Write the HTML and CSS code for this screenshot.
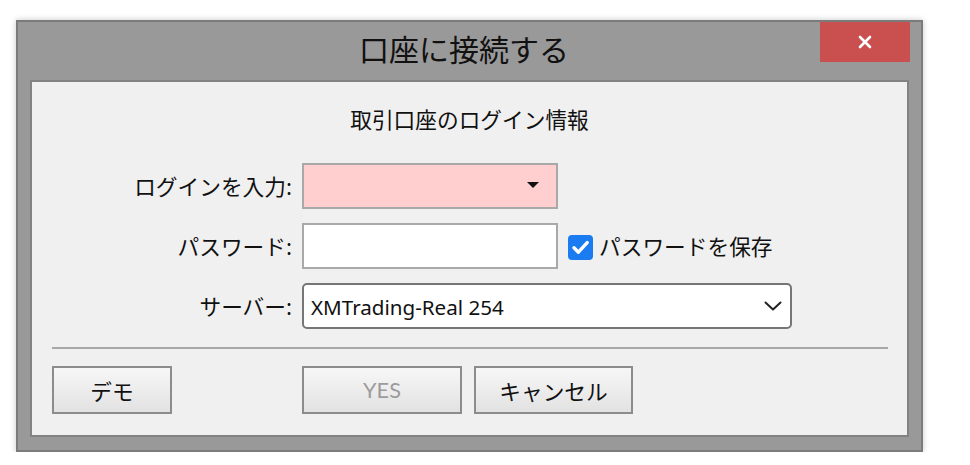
FILE: index.html
```html
<!DOCTYPE html>
<html lang="ja">
<head>
<meta charset="utf-8">
<title>口座に接続する</title>
<link rel="stylesheet" href="styles.css">
</head>
<body>
<div class="window">
  <div class="titlebar">
    <div class="spacer"></div>
    <div class="title">口座に接続する</div>
    <button class="close" type="button" aria-label="閉じる">
      <svg width="14" height="14" viewBox="0 0 14 14"><path d="M2 2 L12 12 M12 2 L2 12" stroke="#fff" stroke-width="2.6" stroke-linecap="round" fill="none"/></svg>
    </button>
  </div>
  <div class="panel">
    <div class="subtitle">取引口座のログイン情報</div>
    <div class="form">
      <label class="label">ログインを入力:</label>
      <div class="field login">
        <svg class="tri" width="12" height="6" viewBox="0 0 12 6"><path d="M0 0 H12 L6 6 Z" fill="#111"/></svg>
      </div>
      <div></div>

      <label class="label">パスワード:</label>
      <div class="field password"></div>
      <div class="save">
        <span class="check">
          <svg width="25" height="25" viewBox="0 0 25 25"><path d="M6 12.8 L10.4 17.2 L19.2 7.6" stroke="#fff" stroke-width="3.4" stroke-linecap="round" stroke-linejoin="round" fill="none"/></svg>
        </span>
        <span class="save-text">パスワードを保存</span>
      </div>

      <label class="label">サーバー:</label>
      <div class="field server">
        <span class="server-text">XMTrading-Real 254</span>
        <svg class="chev" width="18" height="10" viewBox="0 0 18 10"><path d="M1.5 1.5 L9 8.5 L16.5 1.5" stroke="#222" stroke-width="2" stroke-linecap="round" stroke-linejoin="round" fill="none"/></svg>
      </div>
    </div>
    <div class="sep"></div>
    <div class="buttons">
      <button class="btn demo" type="button">デモ</button>
      <button class="btn yes" type="button" disabled>YES</button>
      <button class="btn cancel" type="button">キャンセル</button>
    </div>
  </div>
</div>
</body>
</html>
```

FILE: styles.css
```css
* { box-sizing: border-box; }

html, body {
  margin: 0;
  padding: 0;
  background: #ffffff;
}

body {
  font-family: "Noto Sans CJK JP", "Noto Sans", sans-serif;
  color: #111;
  font-size: 21.7px;
}

.window {
  margin: 20px 0 0 16px;
  width: 907px;
  height: 432px;
  background: #999999;
  border: 2px solid #7b7b7b;
  box-shadow: 0 0 6px rgba(0, 0, 0, 0.22);
  padding: 0 12px 13px 12px;
  display: flex;
  flex-direction: column;
}

.titlebar {
  height: 58px;
  flex: none;
  display: grid;
  grid-template-columns: 1fr auto 1fr;
  align-items: start;
  margin: 0 -1px 0 -12px;
}

.title {
  font-size: 30px;
  line-height: 40px;
  padding-top: 6px;
  color: #111;
  text-align: center;
}

.close {
  justify-self: end;
  width: 90px;
  height: 40px;
  border: 0;
  margin: 0;
  padding: 0;
  background: #c9504f;
  display: flex;
  align-items: center;
  justify-content: center;
}

.panel {
  flex: 1;
  background: #f0f0f0;
  border: 2px solid #828282;
  display: flex;
  flex-direction: column;
}

.subtitle {
  text-align: center;
  line-height: 28px;
  margin-top: 23px;
}

.form {
  margin-top: 30px;
  display: grid;
  grid-template-columns: 260px 256px 224px;
  grid-auto-rows: 46px;
  column-gap: 10px;
  row-gap: 14px;
}

.label {
  justify-self: end;
  align-self: center;
  line-height: 28px;
}

.field {
  border: 2px solid #a9a9a9;
  background: #ffffff;
  display: flex;
  align-items: center;
}

.login {
  background: #ffcfcf;
  justify-content: flex-end;
  padding-right: 17px;
}

.tri { display: block; margin-top: -3px; }

.server {
  grid-column: 2 / 4;
  border-color: #767676;
  border-radius: 5px;
  justify-content: space-between;
  padding: 0 8px 0 7px;
}

.server-text {
  font-family: "Noto Sans", "Noto Sans CJK JP", sans-serif;
  font-size: 20.6px;
  line-height: 28px;
  margin-top: 1px;
}

.chev { display: block; }

.save {
  display: flex;
  align-items: center;
  gap: 6px;
}

.check {
  width: 25px;
  height: 25px;
  border-radius: 4px;
  background: #1a7cf0;
  display: flex;
  margin-top: 2px;
}

.check svg { display: block; }

.save-text { line-height: 28px; }

.sep {
  height: 2px;
  background: #a8a8a8;
  margin: 18px 19px 0 20px;
}

.buttons {
  margin-top: 17px;
  padding-left: 20px;
  display: flex;
}

.btn {
  font-family: "Noto Sans CJK JP", "Noto Sans", sans-serif;
  font-size: 21.7px;
  color: #111;
  height: 48px;
  border: 2px solid #8c8c8c;
  background: linear-gradient(#f7f7f7, #e2e2e2);
  padding: 0;
  margin: 0;
}

.demo { width: 120px; }

.yes {
  width: 160px;
  margin-left: 130px;
  color: #9c9c9c;
  font-family: "Lato", "Noto Sans", sans-serif;
}

.cancel {
  width: 159px;
  margin-left: 12px;
}
```
